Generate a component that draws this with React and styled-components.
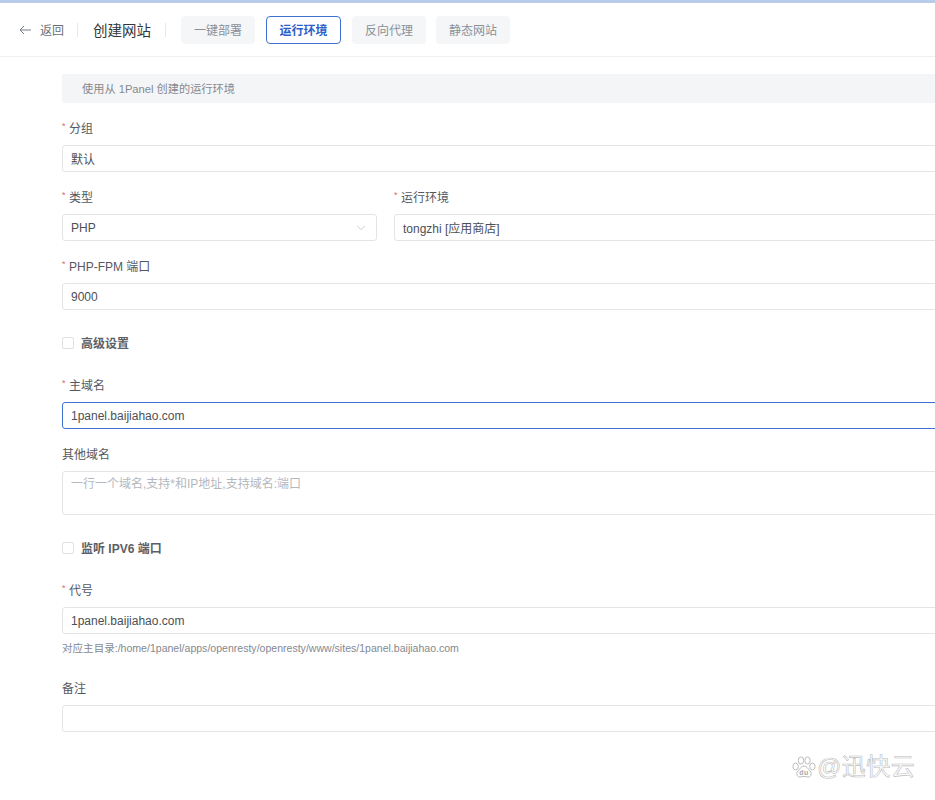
import React from "react";
import styled, { createGlobalStyle } from "styled-components";

const GlobalStyle = createGlobalStyle`
  html, body {
    margin: 0;
    padding: 0;
    background: #fff;
    overflow: hidden;
    font-family: "Liberation Sans", "Noto Sans CJK SC", sans-serif;
  }
`;

const Page = styled.div`
  position: relative;
  width: 935px;
  height: 800px;
  overflow: hidden;
  background: #fff;
  border-top: 3px solid #b9cdea;
  box-sizing: border-box;
`;

const Header = styled.div`
  display: flex;
  align-items: center;
  height: 54px;
  padding: 0 0 0 19px;
  border-bottom: 1px solid #eef0f3;
  box-sizing: border-box;
`;

const BackLink = styled.div`
  display: flex;
  align-items: center;
  gap: 9px;
  font-size: 12px;
  color: #6b7078;
  svg {
    width: 12px;
    height: 10px;
  }
`;

const Divider = styled.div`
  width: 1px;
  height: 14px;
  background: #e6e8eb;
  margin: ${(props) => props.$margin};
`;

const Title = styled.div`
  font-size: 14.5px;
  color: #33363b;
  white-space: nowrap;
`;

const Tabs = styled.div`
  display: flex;
  gap: 11px;
`;

const Tab = styled.div`
  display: flex;
  align-items: center;
  justify-content: center;
  width: ${(props) => (props.$active ? 75 : 74)}px;
  height: 28px;
  box-sizing: border-box;
  border-radius: 4px;
  font-size: 12px;
  color: ${(props) => (props.$active ? "#2a62c9" : "#8b9097")};
  background: ${(props) => (props.$active ? "#fff" : "#f4f6f8")};
  border: ${(props) => (props.$active ? "1px solid #3f72d0" : "none")};
  font-weight: ${(props) => (props.$active ? 700 : 400)};
  &:last-child {
    margin-left: -1px;
  }
`;

const Form = styled.div`
  display: flex;
  flex-direction: column;
  width: 1000px;
  padding: 17px 0 0 62px;
  box-sizing: content-box;
`;

const Notice = styled.div`
  height: 29px;
  display: flex;
  align-items: center;
  box-sizing: border-box;
  padding: 0 0 2px 20px;
  margin-bottom: 15px;
  background: #f4f5f7;
  border-radius: 2px;
  font-size: 11.2px;
  color: #85898f;
`;

const Row = styled.div`
  display: flex;
  gap: 17px;
`;

const Field = styled.div`
  display: flex;
  flex-direction: column;
  width: ${(props) => props.$width || "100%"};
  flex: ${(props) => (props.$width ? "none" : "1")};
  margin-bottom: ${(props) => props.$gap ?? 15}px;
`;

const Label = styled.label`
  display: flex;
  align-items: center;
  height: 18px;
  margin-bottom: 9px;
  font-size: 12px;
  color: #55585e;
  &::before {
    content: ${(props) => (props.$required ? '"*"' : "none")};
    color: #e06a62;
    font-size: 9px;
    width: 7px;
    position: relative;
    top: -1px;
  }
`;

const Input = styled.div`
  display: flex;
  align-items: center;
  justify-content: space-between;
  height: ${(props) => props.$height || 27}px;
  box-sizing: border-box;
  padding: 0 10px 0 8px;
  border-radius: 3px;
  border: 1px solid ${(props) => (props.$focus ? "#3f72d0" : "#e2e4e8")};
  font-size: 12px;
  color: #4c4f55;
  background: #fff;
  svg {
    width: 10px;
    height: 6px;
  }
`;

const TextArea = styled(Input)`
  align-items: flex-start;
  padding-top: 2px;
  color: #b4b7bd;
`;

const CheckRow = styled.div`
  display: flex;
  align-items: center;
  gap: 7px;
  height: 20px;
  margin: 7px 0 23px;
  font-size: 12px;
  font-weight: 700;
  color: #5c5f65;
`;

const CheckBox = styled.span`
  width: 12px;
  height: 12px;
  margin-top: 1px;
  box-sizing: border-box;
  border: 1px solid #dfe1e5;
  border-radius: 2px;
  background: #fff;
`;

const Help = styled.div`
  height: 16px;
  margin-top: 6px;
  font-size: 10.55px;
  line-height: 16px;
  color: #85898f;
  white-space: nowrap;
`;

const Watermark = styled.div`
  position: absolute;
  left: 792px;
  top: 749px;
  display: flex;
  align-items: center;
  gap: 1px;
  font-size: 24px;
  line-height: 30px;
  color: #fff;
  -webkit-text-stroke: 0.6px #bdbdbd;
  letter-spacing: 0.5px;
  white-space: nowrap;
  svg {
    width: 24px;
    height: 24px;
  }
`;

const BackArrow = () => (
  <svg viewBox="0 0 12 10" fill="none" stroke="#777c84" strokeWidth="1">
    <path d="M12 5H1M5 1L1 5l4 4" />
  </svg>
);

const ChevronDown = () => (
  <svg viewBox="0 0 11 7" fill="none" stroke="#c3c6cc" strokeWidth="1">
    <path d="M1 1l4.5 4.5L10 1" />
  </svg>
);

const PawLogo = () => (
  <svg viewBox="0 0 24 24">
    <g fill="#fff" stroke="#b5b5b5" strokeWidth="0.9">
      <ellipse cx="3.6" cy="11.5" rx="2.7" ry="3.4" />
      <ellipse cx="9" cy="5.5" rx="2.7" ry="3.6" />
      <ellipse cx="15.5" cy="5.5" rx="2.7" ry="3.6" />
      <ellipse cx="20.4" cy="11.5" rx="2.7" ry="3.4" />
      <path d="M12 11c-3 0-4 3-6 5-2 2.200-1.500 6 2 6 1.500 0 2.500-.6 4-.6s2.500.6 4 .6c3.500 0 4-3.800 2-6-2-2-3-5-6-5z" />
    </g>
    <text x="12" y="20" textAnchor="middle" fontSize="7" fontWeight="700" fill="#a8a8a8" fontFamily="Liberation Sans, sans-serif">du</text>
  </svg>
);

const App = () => (
  <Page>
    <GlobalStyle />
    <Header>
      <BackLink>
        <BackArrow />
        返回
      </BackLink>
      <Divider $margin="0 15px 0 13px" />
      <Title>创建网站</Title>
      <Divider $margin="0 15px 0 14px" />
      <Tabs>
        <Tab>一键部署</Tab>
        <Tab $active>运行环境</Tab>
        <Tab>反向代理</Tab>
        <Tab>静态网站</Tab>
      </Tabs>
    </Header>
    <Form>
      <Notice>使用从 1Panel 创建的运行环境</Notice>
      <Field>
        <Label $required>分组</Label>
        <Input>默认</Input>
      </Field>
      <Row>
        <Field $width="315px">
          <Label $required>类型</Label>
          <Input>
            PHP
            <ChevronDown />
          </Input>
        </Field>
        <Field>
          <Label $required>运行环境</Label>
          <Input>tongzhi [应用商店]</Input>
        </Field>
      </Row>
      <Field $gap={15}>
        <Label $required>PHP-FPM 端口</Label>
        <Input>9000</Input>
      </Field>
      <CheckRow>
        <CheckBox />
        高级设置
      </CheckRow>
      <Field>
        <Label $required>主域名</Label>
        <Input $focus>1panel.baijiahao.com</Input>
      </Field>
      <Field $gap={15}>
        <Label>其他域名</Label>
        <TextArea $height={44}>一行一个域名,支持*和IP地址,支持域名:端口</TextArea>
      </Field>
      <CheckRow>
        <CheckBox />
        监听 IPV6 端口
      </CheckRow>
      <Field $gap={22}>
        <Label $required>代号</Label>
        <Input>1panel.baijiahao.com</Input>
        <Help>对应主目录:/home/1panel/apps/openresty/openresty/www/sites/1panel.baijiahao.com</Help>
      </Field>
      <Field>
        <Label>备注</Label>
        <Input />
      </Field>
    </Form>
    <Watermark>
      <PawLogo />
      @迅快云
    </Watermark>
  </Page>
);

export default App;
